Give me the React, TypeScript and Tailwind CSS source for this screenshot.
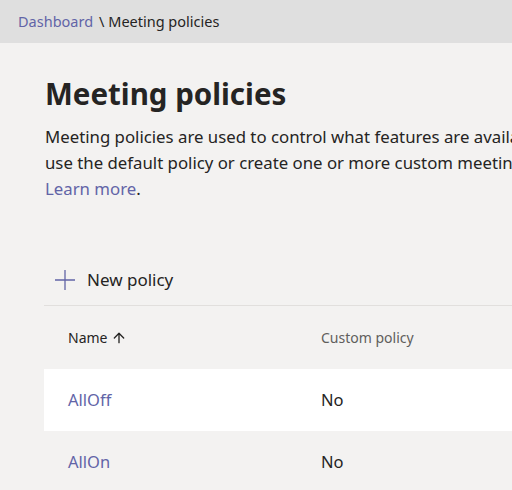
import { ArrowUp } from "lucide-react";

const rows = [
  { name: "AllOff", custom: "No", selected: true },
  { name: "AllOn", custom: "No", selected: false },
];

export default function App() {
  return (
    <div
      className="h-[490px] w-[512px] overflow-hidden bg-[#f3f2f1] text-[#252423]"
      style={{ fontFamily: '"Noto Sans", "Open Sans", sans-serif' }}
    >
      <header className="flex h-[43px] items-center bg-[#dfdfdf] pl-[18px] text-[14.5px]">
        <a className="text-[#6264a7]">Dashboard</a>
        <span className="ml-[6px]">\ Meeting policies</span>
      </header>

      <main className="pl-[45px]">
        <h1 className="mt-[31px] text-[29.5px] leading-[40px] font-bold whitespace-nowrap">
          Meeting policies
        </h1>
        <p className="mt-[10px] w-[780px] text-[16.8px] leading-[26px] whitespace-nowrap">
          Meeting policies are used to control what features are available to users when they join Microsoft
          Teams meetings. You can
          <br />
          use the default policy or create one or more custom meeting policies for people that host meetings in
          your organization.
          <br />
          <a className="text-[#6264a7]">Learn more</a>.
        </p>

        <div className="mt-[53px] -ml-px">
          <button className="flex h-[50px] items-center gap-[11px] pl-[10px] text-[17px]">
            <svg width="22" height="22" viewBox="0 0 22 22" className="text-[#6264a7]">
              <path d="M11 1v20M1 11h20" stroke="currentColor" strokeWidth="1.3" fill="none" />
            </svg>
            New policy
          </button>
          <div className="h-px bg-[#e1dfdd]" />

          <div className="flex h-[63px] items-center text-[14px]">
            <div className="flex w-[277px] items-center gap-1 pl-[24px]">
              Name
              <ArrowUp size={16} strokeWidth={2} />
            </div>
            <div className="text-[#605e5c]">Custom policy</div>
          </div>

          {rows.map((row) => (
            <div
              key={row.name}
              className={`flex h-[62px] items-center text-[16.5px] ${row.selected ? "bg-white" : ""}`}
            >
              <div className="w-[277px] pl-[24px] text-[#6264a7]">{row.name}</div>
              <div>{row.custom}</div>
            </div>
          ))}
        </div>
      </main>
    </div>
  );
}
